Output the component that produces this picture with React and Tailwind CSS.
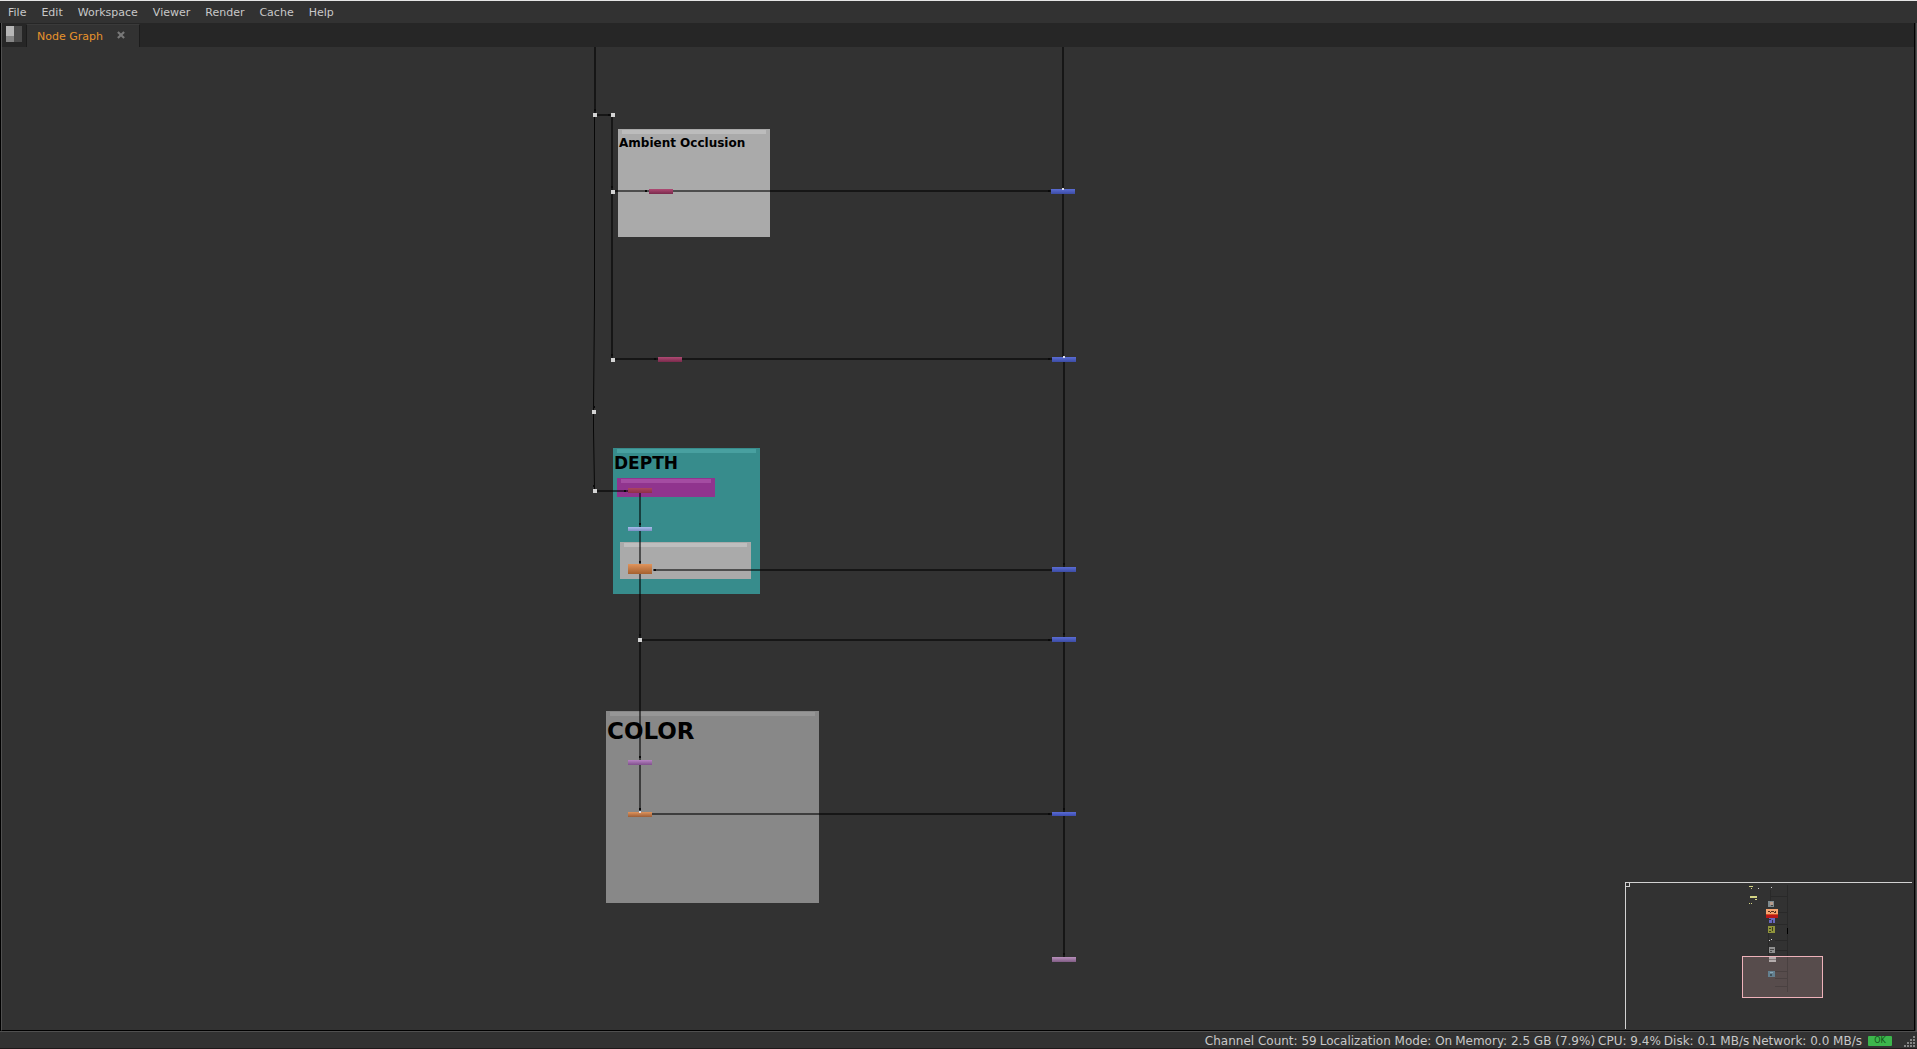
import React from 'react';
import clsx from 'clsx';

const MENUS = ['File', 'Edit', 'Workspace', 'Viewer', 'Render', 'Cache', 'Help'];

const STATS = [
  'Channel Count: 59',
  'Localization Mode: On',
  'Memory: 2.5 GB (7.9%)',
  'CPU: 9.4%',
  'Disk: 0.1 MB/s',
  'Network: 0.0 MB/s',
];

// graph coordinates of the canvas' top left corner
const PAN = { x: 2, y: 47 };

const BACKDROPS = [
  { x: 618, y: 129, w: 152, h: 108, color: 'bg-[#aaaaaa]', strip: 'bg-[#bcbcbc]', title: 'Ambient Occlusion', text: 'text-[12px] leading-[18px]' },
  { x: 613, y: 448, w: 147, h: 146, color: 'bg-[#378c8c]', strip: 'bg-[#48a0a0]', title: 'DEPTH', text: 'text-[17px] leading-5' },
  { x: 617, y: 478, w: 98, h: 19, color: 'bg-[#90348e]', strip: 'bg-[#a44ca2]' },
  { x: 620, y: 542, w: 131, h: 37, color: 'bg-[#aaaaaa]', strip: 'bg-[#bebebe]' },
  { x: 606, y: 711, w: 213, h: 192, color: 'bg-[#888888]', strip: 'bg-[#969696]', title: 'COLOR', text: 'text-[23px] leading-[30px]' },
];

const NODES = [
  { x: 649, y: 189, h: 5, color: 'from-[#b04a74] to-[#7a2a4c]' },
  { x: 658, y: 357, h: 5, color: 'from-[#b04a74] to-[#7a2a4c]' },
  { x: 628, y: 488, h: 5, color: 'from-[#ac4460] to-[#8e3048]' },
  { x: 628, y: 527, h: 4, color: 'from-[#a8bcec] to-[#7c90c4]' },
  { x: 628, y: 564, h: 10, color: 'from-[#e0945c] to-[#a4602f]' },
  { x: 628, y: 760, h: 5, color: 'from-[#b884c4] to-[#80508c]' },
  { x: 628, y: 812, h: 5, color: 'from-[#e0945c] to-[#9c5e38]' },
  { x: 1051, y: 189, h: 5, color: 'from-[#5a6cd4] to-[#3c4ca4]' },
  { x: 1052, y: 357, h: 5, color: 'from-[#5a6cd4] to-[#3c4ca4]' },
  { x: 1052, y: 567, h: 5, color: 'from-[#5a6cd4] to-[#3c4ca4]' },
  { x: 1052, y: 637, h: 5, color: 'from-[#5a6cd4] to-[#3c4ca4]' },
  { x: 1052, y: 812, h: 4, color: 'from-[#5a6cd4] to-[#3c4cb0]' },
  { x: 1052, y: 957, h: 5, color: 'from-[#b890bc] to-[#805c84]' },
];

const DOTS = [[593, 113], [611, 113], [611, 190], [611, 358], [592, 410], [593, 489], [638, 638]];

const WIRES = [
  'M595 47V113',
  'M597 115H611',
  'M612 117V190',
  'M612 194V358',
  'M615 191H649M673 191H1051',
  'M615 359H658M682 359H1052',
  'M597 491H628',
  'M640 493V527M640 531V564M640 574V638M640 642V760M640 765V812',
  'M653 570H1052',
  'M642 640H1052',
  'M652 814H1052',
  'M1063 47V189M1063 194V357',
  'M1064 362V567M1064 572V637M1064 642V812M1064 816V957',
];

const THIN_WIRES = 'M594.5 117V300L593.5 410M593.5 414V430L594.5 489';

const ARROWS = [
  [595, 110], [609, 115], [612, 187], [612, 355], [646, 191], [655, 359], [594, 407], [594, 486], [625, 491],
  [640, 524], [640, 562], [655, 570], [640, 635], [640, 757], [640, 809], [1049, 191], [1049, 359],
  [1049, 640], [1049, 814], [1064, 564], [1064, 634], [1064, 809], [1064, 954],
];

const INPUT_MARKS = [[1062, 188], [1063, 356], [639, 811]];

function PaneIcon() {
  return (
    <svg className="w-4 h-4" viewBox="0 0 16 16" shapeRendering="crispEdges">
      <rect width="16" height="16" fill="#4c4c4c" />
      <rect width="8" height="10" fill="#b6b6b6" />
      <rect y="10" width="8" height="6" fill="#868686" />
    </svg>
  );
}

function MenuBar() {
  return (
    <nav className="flex items-center gap-[15px] h-[22px] px-2 pt-[2px] shrink-0">
      {MENUS.map((name) => (
        <button key={name} type="button">{name}</button>
      ))}
    </nav>
  );
}

function TabBar() {
  return (
    <div className="flex h-6 bg-[#262626] shrink-0">
      <button type="button" aria-label="Pane menu" className="w-6 pl-1 pt-[3px] flex items-start"><PaneIcon /></button>
      <div className="flex items-center mt-px h-[23px] pl-[10px] pr-[14px] gap-[14px] bg-[#323232] border-x border-t border-x-[#1c1c1c] border-t-[#3a3a3a]">
        <button type="button" className="pt-px text-[#e8922c]">Node Graph</button>
        <button type="button" aria-label="Close tab" className="pb-[2px]">
          <svg className="w-2 h-2" viewBox="0 0 9 9" stroke="#787878" strokeWidth="2.4">
            <path d="M1 1L8 8M8 1L1 8" />
          </svg>
        </button>
      </div>
    </div>
  );
}

function Backdrop({ item }) {
  return (
    <div
      className={clsx('absolute px-1 pt-px', item.color)}
      style={{ left: item.x - PAN.x, top: item.y - PAN.y, width: item.w, height: item.h }}
    >
      <div className={clsx('h-1', item.strip)} />
      {item.title && (
        <h2 className={clsx('-ml-[3px] font-bold text-black whitespace-nowrap', item.text)}>{item.title}</h2>
      )}
    </div>
  );
}

function Wires() {
  return (
    <svg className="absolute inset-0 w-full h-full">
      <g transform={`translate(${-PAN.x} ${-PAN.y})`}>
        <path d={WIRES.join('')} fill="none" stroke="#000" strokeOpacity="0.55" strokeWidth="2" />
        <path d={THIN_WIRES} fill="none" stroke="#080808" />
        {ARROWS.map(([x, y]) => (
          <rect key={`${x}-${y}`} x={x - 1} y={y - 1} width="2" height="2" fill="#0a0a0a" />
        ))}
      </g>
    </svg>
  );
}

function MiniMap() {
  return (
    <svg className="absolute right-[2px] bottom-px w-[287px] h-[147px]" viewBox="0 0 287 147" shapeRendering="crispEdges">
      <rect width="287" height="147" fill="#323232" />
      <path d="M162 3h1v107h-1zM146 14h16v1h-16zM150 30h12v1h-12zM150 42h12v1h-12zM150 58h12v1h-12zM150 68h12v1h-12zM145 8h1v12h-1zM143 50h1v40h-1z" fill="#292929" />
      <path d="M162 46h1v6h-1z" fill="#000" />
      <g fill="#d4d484">
        <path d="M124 4h4v1h-4zM126 6h1v1h-1zM125 14h7v2h-7zM130 17h2v1h-2zM124 21h1v1h-1zM126 21h1v1h-1z" />
      </g>
      <path d="M133 6h1v1h-1zM146 5h1v1h-1zM144 58h1v1h-1zM146 57h1v1h-1z" fill="#cfcfcf" />
      <rect x="143" y="19" width="6" height="6" fill="#7e8a8e" />
      <path d="M145 20h3v3h-3z" fill="#b89c8c" />
      <path d="M146 23h2v1h-2z" fill="#444" />
      <rect x="141" y="27" width="12" height="5" fill="#f4a470" />
      <path d="M143 29h2v1h-2zM146 29h3v1h-3zM150 29h1v1h-1zM145 30h1v1h-1zM149 30h2v1h-2z" fill="#54301c" />
      <rect x="141" y="32" width="12" height="1" fill="#d84c20" />
      <rect x="141" y="33" width="12" height="3" fill="#b81818" />
      <rect x="144" y="36" width="6" height="5" fill="#6868c0" />
      <path d="M144 37h2v1h-2zM147 38h1v3h-1z" fill="#30304c" />
      <rect x="143" y="44" width="7" height="7" fill="#90943c" />
      <path d="M144 46h2v1h-2zM147 45h1v4h-1zM144 49h2v1h-2z" fill="#3c3e20" />
      <rect x="144" y="65" width="6" height="6" fill="#909090" />
      <path d="M145 67h4v1h-4zM145 69h2v1h-2z" fill="#484848" />
      <rect x="117" y="74" width="81" height="41" fill="#574c4c" />
      <path d="M162 75h1v35h-1zM150 89h12v1h-12zM150 96h12v1h-12zM150 104h12v1h-12z" fill="#4a4141" />
      <rect x="144" y="75" width="7" height="5" fill="#b4acac" />
      <path d="M144 77h7v1h-7z" fill="#807878" />
      <rect x="143" y="89" width="7" height="6" fill="#648090" />
      <path d="M145 92h2v2h-2z" fill="#405058" />
      <path d="M145 90h3v1h-3z" fill="#88a8b8" />
      <rect x="117.5" y="74.5" width="80" height="41" fill="none" stroke="#eeb2ba" />
      <path d="M0.5 147V0.5H287M4.5 1V4.5H1" fill="none" stroke="#d2d2d2" />
    </svg>
  );
}

function NodeGraph() {
  return (
    <main className="relative flex-1 min-h-0 overflow-hidden bg-[#323232]">
      {BACKDROPS.map((item) => (
        <Backdrop key={`${item.x}-${item.y}`} item={item} />
      ))}
      <Wires />
      {NODES.map((node) => (
        <div
          key={`${node.x}-${node.y}`}
          className={clsx('absolute w-6 bg-linear-to-b', node.color)}
          style={{ left: node.x - PAN.x, top: node.y - PAN.y, height: node.h }}
        />
      ))}
      {DOTS.map(([x, y]) => (
        <div key={`${x}-${y}`} className="absolute size-1 bg-[#d4d4d4]" style={{ left: x - PAN.x, top: y - PAN.y }} />
      ))}
      {INPUT_MARKS.map(([x, y]) => (
        <div key={`${x}-${y}`} className="absolute size-[2px] bg-[#dcdce8]" style={{ left: x - PAN.x, top: y - PAN.y }} />
      ))}
      <MiniMap />
    </main>
  );
}

function StatusBar() {
  return (
    <footer className="flex items-center justify-end gap-[6px] h-[18px] pl-2 pt-[2px] pr-px shrink-0 border-t border-t-[#505050] border-b border-b-[#1e191a]">
      <div className="flex gap-[3px] text-[12px]">
        {STATS.map((stat) => (
          <span key={stat} className="whitespace-nowrap">{stat}</span>
        ))}
      </div>
      <span className="w-6 h-[10px] rounded-[1px] bg-[#3cb64c] text-[#14541c] text-[8px] leading-[10px] text-center">OK</span>
      <svg className="w-3 h-3 ml-[6px] self-end" viewBox="0 0 12 12" fill="#848484" shapeRendering="crispEdges">
        <path d="M9 0h2v2h-2zM6 3h2v2h-2zM9 3h2v2h-2zM3 6h2v2h-2zM6 6h2v2h-2zM9 6h2v2h-2zM0 9h2v2h-2zM3 9h2v2h-2zM6 9h2v2h-2zM9 9h2v2h-2z" />
      </svg>
    </footer>
  );
}

export default function App() {
  return (
    <div className="h-screen flex flex-col overflow-hidden bg-[#323232] border-t border-t-[#e6e6e6] font-['DejaVu_Sans',sans-serif] text-[11px] leading-4 text-[#c8c8c8]">
      <MenuBar />
      <div className="flex-1 min-h-0 flex border-l border-l-black border-r border-r-[#505050] pr-px">
        <div className="flex-1 min-w-0 flex flex-col border-l border-l-[#505050] border-r border-r-black border-b border-b-black">
          <TabBar />
          <NodeGraph />
        </div>
      </div>
      <StatusBar />
    </div>
  );
}
